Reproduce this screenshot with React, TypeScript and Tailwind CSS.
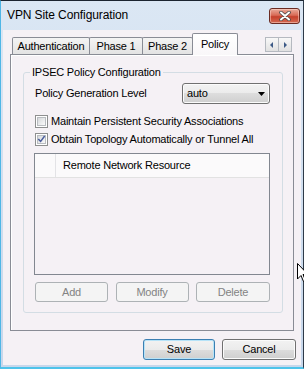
import React from "react";

const btn =
  "h-[21px] rounded-[3px] border border-[#707070] bg-[linear-gradient(#f2f2f2_0%,#ebebeb_50%,#dddddd_50%,#cfcfcf_100%)] shadow-[inset_0_0_0_1px_#fbfbfb] flex items-center justify-center text-black";

function Tab({ label, w, selected = false }: { label: string; w: string; selected?: boolean }) {
  if (selected) {
    return (
      <div
        className={`${w} h-[22px] -mb-px -ml-px relative z-10 border-t border-l border-r border-[#898c95] rounded-t-[2px] bg-gradient-to-b from-white to-[#f9f7f9] flex items-start justify-center pt-[4px]`}
      >
        {label}
      </div>
    );
  }
  return (
    <div
      className={`${w} h-[17px] -ml-px first:ml-0 border-t border-l border-r border-[#898c95] rounded-t-[2px] bg-gradient-to-b from-[#f4f4f4] to-[#e3e3e3] flex items-center justify-center`}
    >
      {label}
    </div>
  );
}

function Checkbox({ checked }: { checked?: boolean }) {
  return (
    <div className="w-[13px] h-[13px] border border-[#8e8f8f] bg-white p-[1px] shrink-0">
      <div className="w-full h-full border border-[#b9bcc0] bg-gradient-to-br from-[#d6d8db] to-[#fafafa] relative">
        {checked && (
          <svg viewBox="0 0 9 9" className="absolute inset-0 w-full h-full overflow-visible">
            <path d="M1 4.4 L3.4 7 L8 0.8" fill="none" stroke="#4a5c9c" strokeWidth="1.9" strokeLinecap="square" />
          </svg>
        )}
      </div>
    </div>
  );
}

export default function App() {
  return (
    <div className="w-[304px] h-[369px] overflow-hidden relative font-['Liberation_Sans',Arial,sans-serif] text-[11px] leading-[13px] tracking-[-0.2px] text-black">
      <div className="w-full h-full flex flex-col border-t border-t-[#1b2430] border-l border-l-[#4fb6e6] border-r border-r-[#2e3a48] border-b-[2px] border-b-[#4ec3ea] bg-gradient-to-b from-[#dbe7f4] to-[#c7d7eb]">
        {/* title bar */}
        <div className="h-[29px] shrink-0 flex items-start pl-[6px] pr-[3px]">
          <span className="self-center text-[12px] leading-[15px] tracking-[-0.1px] text-black">VPN Site Configuration</span>
          <div className="ml-auto mt-[7px] w-[31px] h-[16px] rounded-[3px] border border-[#6a2b22] bg-[linear-gradient(#e9ab9b_0%,#d86a56_45%,#c5402c_55%,#d46a52_100%)] shadow-[inset_0_0_0_1px_rgba(255,220,210,0.5)] flex items-center justify-center">
            <svg width="12" height="10" viewBox="0 0 12 10">
              <path d="M2 1.5 L10 8.5 M10 1.5 L2 8.5" stroke="#4a4a4a" strokeWidth="3.6" strokeLinecap="round" />
              <path d="M2 1.5 L10 8.5 M10 1.5 L2 8.5" stroke="#ffffff" strokeWidth="2" strokeLinecap="round" />
            </svg>
          </div>
        </div>

        {/* client */}
        <div className="flex-1 mx-[2px] mb-[2px] bg-[#f5f1f5] flex flex-col pt-[3px]">
          {/* tabs */}
          <div className="h-[21px] shrink-0 flex items-end pl-[9px] pr-[9px]">
            <Tab label="Authentication" w="w-[78px]" />
            <Tab label="Phase 1" w="w-[54px]" />
            <Tab label="Phase 2" w="w-[51px]" />
            <Tab label="Policy" w="w-[46px]" selected />
            <div className="ml-auto self-start mt-[4px] flex">
              <div className="w-[14px] h-[15px] border border-[#b5b9c0] bg-gradient-to-b from-[#f8f8f8] to-[#e1e1e1] flex items-center justify-center">
                <svg width="4" height="6" viewBox="0 0 4 6"><path d="M3 0 L0 3 L3 6 Z" fill="#3d5a86" /></svg>
              </div>
              <div className="w-[14px] h-[15px] -ml-px border border-[#b5b9c0] bg-gradient-to-b from-[#f8f8f8] to-[#e1e1e1] flex items-center justify-center">
                <svg width="4" height="6" viewBox="0 0 4 6"><path d="M1 0 L4 3 L1 6 Z" fill="#3d5a86" /></svg>
              </div>
            </div>
          </div>

          {/* panel */}
          <div className="mx-[7px] h-[277px] shrink-0 border border-[#898c95] shadow-[inset_1px_1px_0_#ffffff] flex flex-col">
            <fieldset className="mt-[11px] ml-[12px] mr-[10px] border border-[#d3dde4] rounded-[3px] pl-[10px] pr-[12px] pb-[10px]">
              <legend className="-ml-[4px] px-[2px] text-[11px] leading-[13px]">IPSEC Policy Configuration</legend>
              <div className="mt-[4px] h-[21px] flex items-center">
                <span className="ml-[1px]">Policy Generation Level</span>
                <div className={`${btn} ml-auto w-[88px] !justify-between pl-[4px] pr-[4px]`}>
                  <span>auto</span>
                  <svg width="7" height="4" viewBox="0 0 7 4"><path d="M0 0 L7 0 L3.5 4 Z" fill="#000" /></svg>
                </div>
              </div>
              <div className="mt-[11px] h-[13px] flex items-center ml-[1px]">
                <Checkbox />
                <span className="ml-[3px]">Maintain Persistent Security Associations</span>
              </div>
              <div className="mt-[5px] h-[13px] flex items-center ml-[1px]">
                <Checkbox checked />
                <span className="ml-[3px]">Obtain Topology Automatically or Tunnel All</span>
              </div>
              <div className="mt-[7px] h-[122px] border border-[#828790] bg-[#f5f1f5] flex flex-col">
                <div className="h-[24px] flex border-b border-[#e2e2e2] bg-[#fbfafb]">
                  <div className="w-[21px] border-r border-[#e3e3e6]" />
                  <div className="flex-1 flex items-center pl-[7px]">Remote Network Resource</div>
                </div>
              </div>
              <div className="mt-[7px] flex justify-between ml-[1px]">
                <div className="w-[73px] h-[20px] rounded-[3px] border border-[#adb2b5] bg-[#f4f4f4] text-[#838383] flex items-center justify-center">Add</div>
                <div className="w-[73px] h-[20px] rounded-[3px] border border-[#adb2b5] bg-[#f4f4f4] text-[#838383] flex items-center justify-center">Modify</div>
                <div className="w-[74px] h-[20px] rounded-[3px] border border-[#adb2b5] bg-[#f4f4f4] text-[#838383] flex items-center justify-center">Delete</div>
              </div>
            </fieldset>
          </div>

          {/* bottom buttons */}
          <div className="mt-[8px] flex justify-end gap-[7px] pr-[5px]">
            <div className={`${btn} w-[72px] !border-[#3c7fb1] !shadow-[inset_0_0_0_1px_#b6e3f8]`}>Save</div>
            <div className={`${btn} w-[74px]`}>Cancel</div>
          </div>
        </div>
      </div>

      {/* mouse cursor */}
      <svg className="absolute left-[297px] top-[263px]" width="12" height="20" viewBox="0 0 12 20">
        <path d="M0.5 0.5 L0.5 16 L4 12.5 L6.5 18.5 L8.5 17.5 L6 11.5 L11 11.5 Z" fill="#ffffff" stroke="#000000" strokeWidth="1" />
      </svg>
    </div>
  );
}
